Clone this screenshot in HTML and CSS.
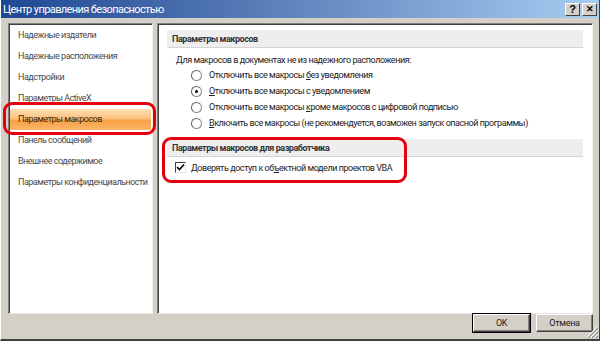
FILE: index.html
```html
<!DOCTYPE html>
<html lang="ru">
<head>
    <meta charset="UTF-8">
    <title>Центр управления безопасностью</title>
    <link rel="stylesheet" href="styles.css">
</head>
<body>
    <div class="window">
        <div class="titlebar">
            <span class="title">Центр управления безопасностью</span>
            <div class="title-buttons">
                <span class="tbtn">?</span>
                <span class="tbtn close">&#x2715;</span>
            </div>
        </div>

        <div class="main">
            <!-- Left navigation -->
            <div class="panel nav">
                <div class="nav-item">Надежные издатели</div>
                <div class="nav-item">Надежные расположения</div>
                <div class="nav-item">Надстройки</div>
                <div class="nav-item">Параметры ActiveX</div>
                <div class="nav-item selected">Параметры макросов</div>
                <div class="nav-item">Панель сообщений</div>
                <div class="nav-item">Внешнее содержимое</div>
                <div class="nav-item">Параметры конфиденциальности</div>
                <div class="mark mark-nav"></div>
            </div>

            <!-- Content -->
            <div class="panel content">
                <div class="section-head">Параметры макросов</div>
                <div class="intro">Для макросов в документах не из надежного расположения:</div>
                <div class="options">
                    <div class="option"><span class="radio"></span><span class="label">Отключить все макросы <u>б</u>ез уведомления</span></div>
                    <div class="option"><span class="radio checked"></span><span class="label"><u>О</u>тключить все макросы с уведомлением</span></div>
                    <div class="option"><span class="radio"></span><span class="label">Отключить все макросы <u>к</u>роме макросов с цифровой подписью</span></div>
                    <div class="option"><span class="radio"></span><span class="label"><u>В</u>ключить все макросы (не рекомендуется, возможен запуск опасной программы)</span></div>
                </div>
                <div class="section-head second">Параметры макросов для разработчика</div>
                <div class="check-row">
                    <span class="checkbox">
                        <svg width="9" height="9" viewBox="0 0 9 9"><path d="M1 4 L3.5 6.5 L8 1.5" fill="none" stroke="#000" stroke-width="1.6"/></svg>
                    </span>
                    <span class="label">Доверять доступ к об<u>ъ</u>ектной модели проектов VBA</span>
                </div>
                <div class="mark mark-dev"></div>
            </div>
        </div>

        <div class="footer">
            <button class="btn default">OK</button>
            <button class="btn">Отмена</button>
            <svg class="grip" width="12" height="12" viewBox="0 0 12 12">
                <path d="M11 1 L1 11 M11 5 L5 11 M11 9 L9 11" stroke="#fff" stroke-width="1"/>
                <path d="M12 2 L2 12 M12 6 L6 12 M12 10 L10 12" stroke="#808080" stroke-width="1"/>
            </svg>
        </div>
    </div>
</body>
</html>
```

FILE: styles.css
```css
* {
    margin: 0;
    padding: 0;
    box-sizing: border-box;
}
body {
    width: 600px;
    height: 341px;
    overflow: hidden;
    background: #d4d0c8;
    font-family: Roboto, "Liberation Sans", sans-serif;
}
.window {
    width: 600px;
    height: 341px;
    display: flex;
    flex-direction: column;
    background: #d4d0c8;
    border-left: 1px solid #fff;
    border-right: 1px solid #404040;
    border-bottom: 2px solid #404040;
}
.titlebar {
    height: 18px;
    display: flex;
    align-items: center;
    justify-content: space-between;
    padding: 0 2px 0 2px;
    background: linear-gradient(to right, #1f4894, #5478b4 40%, #a8cdf2);
}
.title {
    color: #fff;
    font-size: 11px;
    letter-spacing: -0.6px;
}
.title-buttons {
    display: flex;
    gap: 2px;
}
.tbtn {
    width: 15px;
    height: 13px;
    background: #d4d0c8;
    border: 1px solid;
    border-color: #fff #404040 #404040 #fff;
    font-family: "Liberation Sans", sans-serif;
    font-weight: bold;
    font-size: 11px;
    line-height: 11px;
    text-align: center;
    color: #000;
}
.tbtn.close {
    font-size: 9px;
}
.main {
    display: flex;
    gap: 4px;
    padding: 5px 6px 0 7px;
    height: 296px;
}
.panel {
    position: relative;
    background: #fff;
    border: 1px solid;
    border-color: #808080 #f0f0f0 #e8e8e8 #808080;
    box-shadow: inset 1px 1px 0 #404040;
}
.nav {
    width: 145px;
    padding: 1px 1px 0 1px;
}
.nav-item {
    height: 21px;
    line-height: 21px;
    padding-left: 8px;
    font-size: 9px;
    letter-spacing: -0.5px;
    color: #4a4a4a;
    white-space: nowrap;
}
.nav-item.selected {
    background: linear-gradient(#fde0b6, #fbc17e 45%, #f7a143 55%, #f9b56c);
    color: #3a2a10;
}
.content {
    flex: 1;
    padding: 6px 9px 0 9px;
    font-size: 9px;
    letter-spacing: -0.45px;
    color: #222;
}
.section-head {
    height: 18px;
    line-height: 18px;
    padding-left: 5px;
    background: #eeeeee;
    border-bottom: 1px solid #d4d4d4;
    font-weight: bold;
    color: #333;
}
.section-head.second {
    margin-top: 8px;
}
.intro {
    padding: 5px 0 0 9px;
    line-height: 14px;
    white-space: nowrap;
}
.options {
    padding-left: 24px;
}
.option {
    display: flex;
    align-items: center;
    height: 16px;
}
.label {
    white-space: nowrap;
}
.radio {
    flex: none;
    width: 11px;
    height: 11px;
    margin-right: 7px;
    border-radius: 50%;
    border: 1px solid #8a8a8a;
    border-top-color: #606060;
    border-left-color: #606060;
    background: #fff;
    position: relative;
}
.radio.checked::after {
    content: "";
    position: absolute;
    left: 3px;
    top: 3px;
    width: 3px;
    height: 3px;
    border-radius: 50%;
    background: #000;
}
.check-row {
    display: flex;
    align-items: center;
    padding: 5px 0 0 8px;
}
.checkbox {
    flex: none;
    width: 11px;
    height: 11px;
    margin-right: 5px;
    border: 1px solid;
    border-color: #404040 #e0e0e0 #e0e0e0 #404040;
    background: #fff;
    display: flex;
    align-items: center;
    justify-content: center;
}
.mark {
    position: absolute;
    border: 3px solid #e4000c;
    border-radius: 9px;
}
.mark-nav {
    left: -6px;
    top: 78px;
    width: 153px;
    height: 33px;
}
.mark-dev {
    left: 4px;
    top: 113px;
    width: 245px;
    height: 46px;
}
.footer {
    position: relative;
    flex: 1;
    display: flex;
    justify-content: flex-end;
    gap: 6px;
    padding: 0 6px 0 0;
}
.btn {
    width: 57px;
    height: 18px;
    background: #d4d0c8;
    border: 1px solid;
    border-color: #fff #404040 #404040 #fff;
    box-shadow: inset -1px -1px 0 #808080;
    font-family: Roboto, "Liberation Sans", sans-serif;
    font-size: 9px;
    letter-spacing: -0.3px;
    color: #222;
}
.btn.default {
    outline: 1px solid #000;
}
.grip {
    position: absolute;
    right: 1px;
    bottom: 1px;
}
```
